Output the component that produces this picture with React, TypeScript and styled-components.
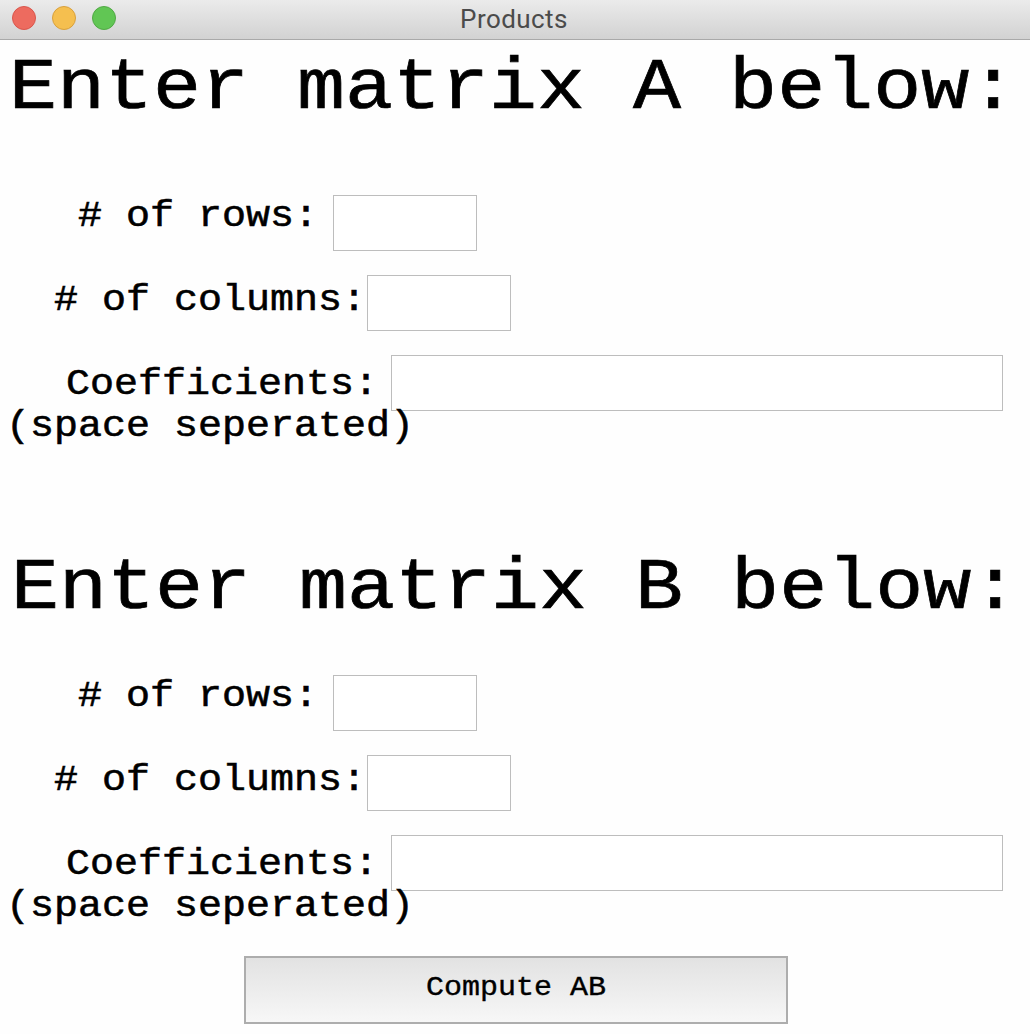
import React from 'react';
import styled, { createGlobalStyle } from 'styled-components';

const GlobalStyle = createGlobalStyle`
  * { box-sizing: border-box; }
  body { margin: 0; background: #fefefe; }
`;

const Window = styled.div`
  width: 1030px;
  height: 1034px;
  overflow: hidden;
  background: #fefefe;
  color: #000;
  font-family: 'Liberation Mono', 'Courier New', monospace;
`;

const TitleBar = styled.header`
  display: grid;
  grid-template-columns: 1fr auto 1fr;
  height: 40px;
  padding: 0 12px;
  background: linear-gradient(#ebebeb, #d2d2d2);
  border-bottom: 1px solid #a9a9a9;
`;

const Lights = styled.div`
  display: flex;
  gap: 16px;
  padding-top: 6px;
`;

const Light = styled.span<{ $fill: string; $edge: string }>`
  width: 24px;
  height: 24px;
  border-radius: 50%;
  background: ${(p) => p.$fill};
  border: 1px solid ${(p) => p.$edge};
`;

const Title = styled.div`
  margin-right: 2px;
  font: 400 26px/38px Roboto, sans-serif;
  letter-spacing: 0.45px;
  color: #4b4b4b;
`;

const Section = styled.section<{ $height: number }>`
  height: ${(p) => p.$height}px;
  padding-top: 7px;
`;

const Heading = styled.h1<{ $indent: number; $after: number }>`
  margin: 0 0 ${(p) => p.$after}px ${(p) => p.$indent}px;
  font-size: 80px;
  font-weight: 400;
  line-height: 80px;
  white-space: pre;
  -webkit-text-stroke: 0.8px #000;
  transform: scaleY(0.9);
  transform-origin: 0 76.7%;
`;

const FieldRow = styled.div<{ $indent: number }>`
  display: flex;
  align-items: flex-start;
  height: 80px;
  padding-left: ${(p) => p.$indent}px;
`;

const Label = styled.label<{ $drop: number; $gap: number }>`
  margin: ${(p) => p.$drop}px ${(p) => p.$gap}px 0 0;
  font-size: 40px;
  line-height: 40px;
  white-space: pre;
  -webkit-text-stroke: 0.6px #000;
  transform: scaleY(0.9);
  transform-origin: 0 76.7%;
`;

const Hint = styled(Label)`
  display: block;
  margin: -29px 0 0 6px;
`;

const Input = styled.input<{ $width: number }>`
  width: ${(p) => p.$width}px;
  height: 56px;
  padding: 0 8px;
  border: 1px solid #bdbdbd;
  border-radius: 0;
  background: #fff;
  font: 40px 'Liberation Mono', monospace;
  outline: none;
`;

const Button = styled.button`
  display: block;
  width: 544px;
  height: 68px;
  margin: 0 0 0 244px;
  padding: 0 0 6px;
  border: 2px solid #adadad;
  border-radius: 0;
  background: linear-gradient(#e2e2e2, #f7f7f7);
  color: #000;
  font: 30px/36px 'Liberation Mono', monospace;
`;

const ButtonText = styled.span`
  display: inline-block;
  -webkit-text-stroke: 0.4px #000;
  transform: scaleY(0.9);
  transform-origin: 0 76.7%;
`;

interface MatrixProps {
  name: string;
  indent: number;
  after: number;
  height: number;
}

function MatrixForm({ name, indent, after, height }: MatrixProps) {
  return (
    <Section $height={height}>
      <Heading $indent={indent} $after={after}>{`Enter matrix ${name} below:`}</Heading>
      <FieldRow $indent={78}>
        <Label htmlFor={`rows${name}`} $drop={1} $gap={15}># of rows:</Label>
        <Input id={`rows${name}`} $width={144} />
      </FieldRow>
      <FieldRow $indent={54}>
        <Label htmlFor={`cols${name}`} $drop={5} $gap={1}># of columns:</Label>
        <Input id={`cols${name}`} $width={144} />
      </FieldRow>
      <FieldRow $indent={66}>
        <Label htmlFor={`coef${name}`} $drop={9} $gap={13}>Coefficients:</Label>
        <Input id={`coef${name}`} $width={612} />
      </FieldRow>
      <Hint as="div" $drop={0} $gap={0}>(space seperated)</Hint>
    </Section>
  );
}

export default function App() {
  return (
    <Window>
      <GlobalStyle />
      <TitleBar>
        <Lights>
          <Light $fill="#ed6b5f" $edge="#d9564c" />
          <Light $fill="#f5bf4f" $edge="#d8a03d" />
          <Light $fill="#61c654" $edge="#51a945" />
        </Lights>
        <Title>Products</Title>
      </TitleBar>
      <MatrixForm name="A" indent={9} after={68} height={500} />
      <MatrixForm name="B" indent={11} after={48} height={416} />
      <Button>
        <ButtonText>Compute AB</ButtonText>
      </Button>
    </Window>
  );
}
